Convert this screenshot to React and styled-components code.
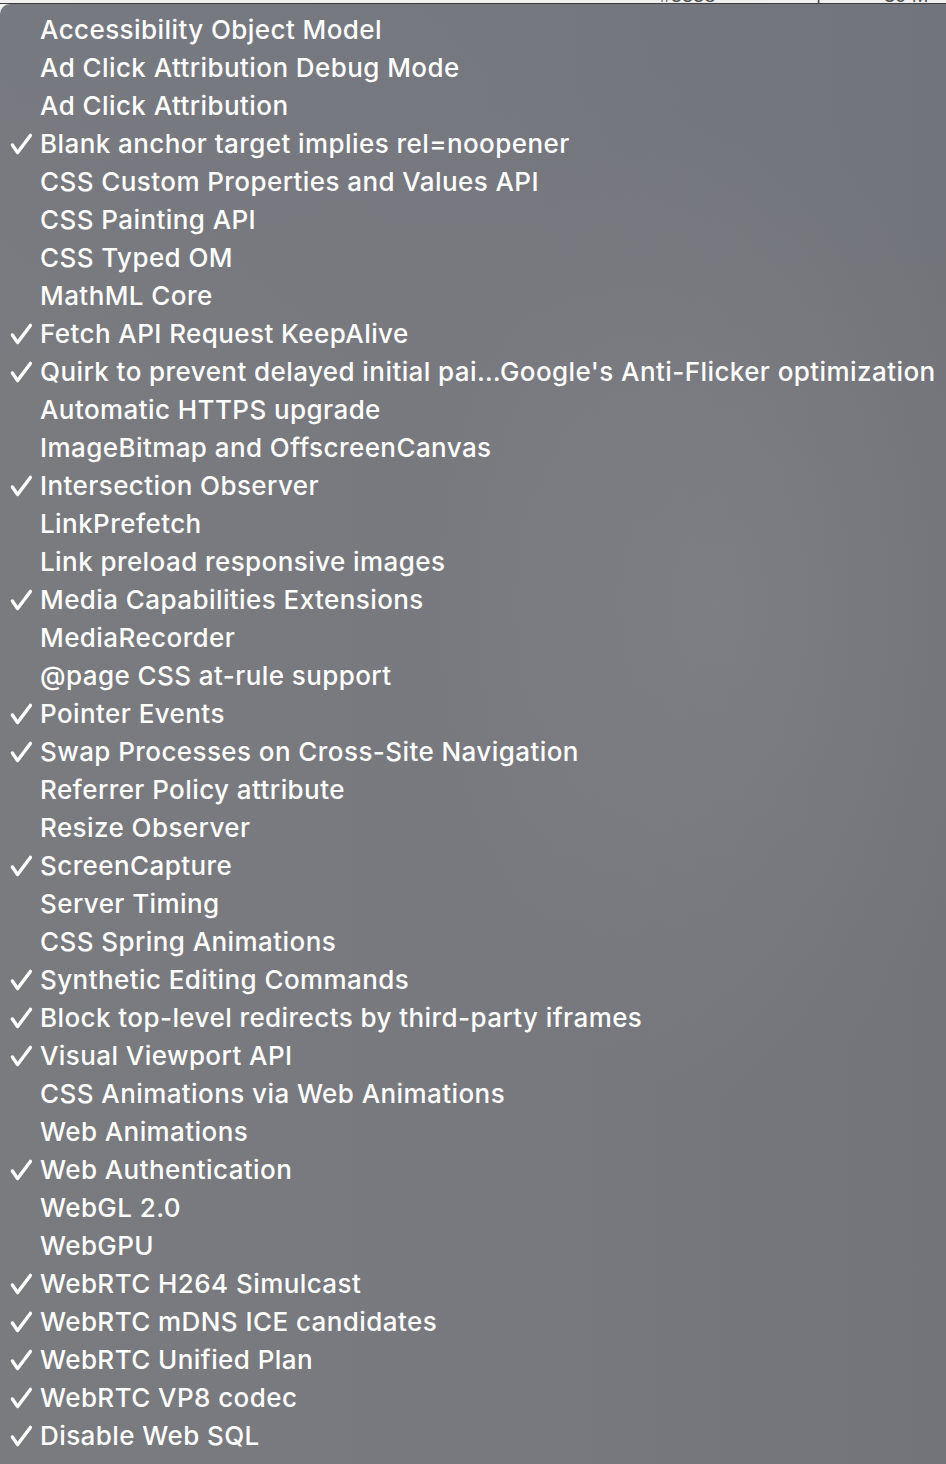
import React from "react";
import styled, { createGlobalStyle } from "styled-components";

const GlobalStyle = createGlobalStyle`
  html, body {
    margin: 0;
    padding: 0;
    background: #f2f2f2;
  }
  body {
    font-family: Inter, "Noto Sans", "Liberation Sans", sans-serif;
  }
`;

const items = [
  { label: "Accessibility Object Model" },
  { label: "Ad Click Attribution Debug Mode" },
  { label: "Ad Click Attribution" },
  { label: "Blank anchor target implies rel=noopener", checked: true },
  { label: "CSS Custom Properties and Values API" },
  { label: "CSS Painting API" },
  { label: "CSS Typed OM" },
  { label: "MathML Core" },
  { label: "Fetch API Request KeepAlive", checked: true },
  {
    label: "Quirk to prevent delayed initial pai…Google's Anti-Flicker optimization",
    checked: true,
  },
  { label: "Automatic HTTPS upgrade" },
  { label: "ImageBitmap and OffscreenCanvas" },
  { label: "Intersection Observer", checked: true },
  { label: "LinkPrefetch" },
  { label: "Link preload responsive images" },
  { label: "Media Capabilities Extensions", checked: true },
  { label: "MediaRecorder" },
  { label: "@page CSS at-rule support" },
  { label: "Pointer Events", checked: true },
  { label: "Swap Processes on Cross-Site Navigation", checked: true },
  { label: "Referrer Policy attribute" },
  { label: "Resize Observer" },
  { label: "ScreenCapture", checked: true },
  { label: "Server Timing" },
  { label: "CSS Spring Animations" },
  { label: "Synthetic Editing Commands", checked: true },
  { label: "Block top-level redirects by third-party iframes", checked: true },
  { label: "Visual Viewport API", checked: true },
  { label: "CSS Animations via Web Animations" },
  { label: "Web Animations" },
  { label: "Web Authentication", checked: true },
  { label: "WebGL 2.0" },
  { label: "WebGPU" },
  { label: "WebRTC H264 Simulcast", checked: true },
  { label: "WebRTC mDNS ICE candidates", checked: true },
  { label: "WebRTC Unified Plan", checked: true },
  { label: "WebRTC VP8 codec", checked: true },
  { label: "Disable Web SQL", checked: true },
];

const Page = styled.div`
  width: 946px;
  height: 1464px;
  overflow: hidden;
  display: flex;
  flex-direction: column;
`;

// window behind the menu, only its lowest pixels show
const Behind = styled.div`
  height: 3px;
  flex: none;
  background: #f1f1f1;
  border-bottom: 1px solid #3c3c3c;
  position: relative;
  overflow: hidden;
`;

const BehindText = styled.span`
  position: absolute;
  left: ${(p) => p.$x}px;
  top: -15px;
  font-size: 20px;
  line-height: 20px;
  color: #555;
  font-family: "Liberation Sans", sans-serif;
`;

const Menu = styled.div`
  flex: 1;
  border-top-left-radius: 10px;
  padding-top: 7px;
  background:
    radial-gradient(ellipse 420px 700px at 720px 600px, rgba(140, 140, 146, 0.35), rgba(140, 140, 146, 0) 70%),
    linear-gradient(180deg, rgba(110, 116, 132, 0.25) 0%, rgba(110, 116, 132, 0) 25%),
    linear-gradient(90deg, #7a7b7f 0%, #78797e 55%, #727479 100%);
  display: flex;
  flex-direction: column;
`;

const Row = styled.div`
  height: 38px;
  display: flex;
  align-items: center;
  padding-left: 10px;
  color: #ffffff;
  white-space: nowrap;
`;

const CheckSlot = styled.span`
  width: 30px;
  flex: none;
  display: flex;
  align-items: center;
`;

const Label = styled.span`
  font-size: 26px;
  font-weight: 500;
  letter-spacing: 0.42px;
  line-height: 38px;
`;

const Check = () => (
  <svg width="24" height="22" viewBox="0 0 24 22" fill="none">
    <path
      d="M2.4 12 L7.6 19.6 L20.4 2.4"
      stroke="#ffffff"
      strokeWidth="3.4"
      strokeLinecap="round"
      strokeLinejoin="round"
    />
  </svg>
);

export default function App() {
  return (
    <Page>
      <GlobalStyle />
      <Behind>
        <BehindText $x={660}>#5558</BehindText>
        <BehindText $x={816}>|</BehindText>
        <BehindText $x={884}>30 M</BehindText>
      </Behind>
      <Menu>
        {items.map((item) => (
          <Row key={item.label}>
            <CheckSlot>{item.checked && <Check />}</CheckSlot>
            <Label>{item.label}</Label>
          </Row>
        ))}
      </Menu>
    </Page>
  );
}
